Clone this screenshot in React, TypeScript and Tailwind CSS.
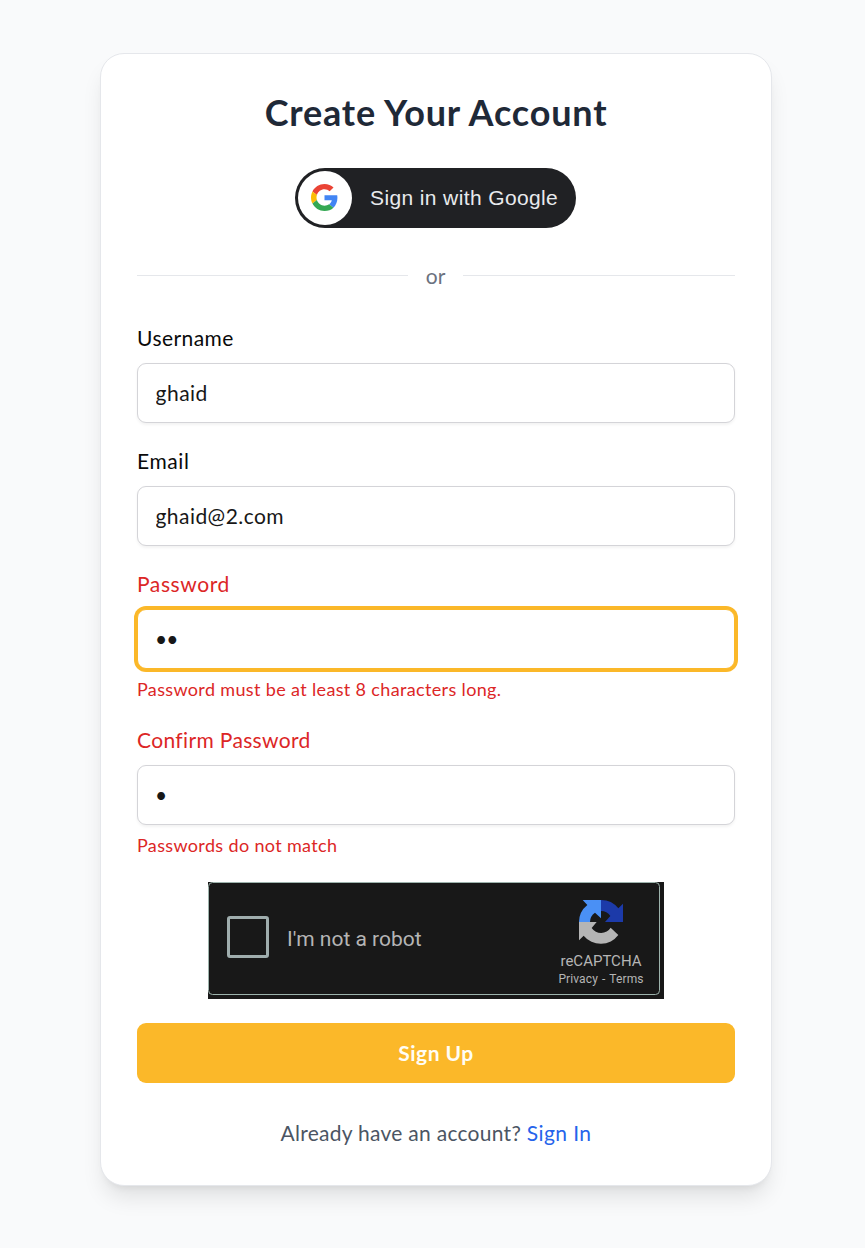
import React from "react";
import { clsx } from "clsx";

function GoogleLogo() {
  return (
    <svg viewBox="0 0 48 48" className="size-[27px]">
      <path fill="#EA4335" d="M24 9.5c3.54 0 6.71 1.22 9.21 3.6l6.85-6.85C35.9 2.38 30.47 0 24 0 14.62 0 6.51 5.38 2.56 13.22l7.98 6.19C12.43 13.72 17.74 9.5 24 9.5z" />
      <path fill="#4285F4" d="M46.98 24.55c0-1.57-.15-3.09-.38-4.55H24v9.02h12.94c-.58 2.96-2.26 5.48-4.78 7.18l7.73 6c4.51-4.18 7.09-10.36 7.09-17.65z" />
      <path fill="#FBBC05" d="M10.53 28.59c-.48-1.45-.76-2.99-.76-4.59s.27-3.14.76-4.59l-7.98-6.19C.92 16.46 0 20.12 0 24c0 3.88.92 7.54 2.56 10.78l7.97-6.19z" />
      <path fill="#34A853" d="M24 48c6.48 0 11.93-2.13 15.89-5.81l-7.73-6c-2.15 1.45-4.92 2.3-8.16 2.3-6.26 0-11.57-4.22-13.47-9.91l-7.98 6.19C6.51 42.62 14.62 48 24 48z" />
    </svg>
  );
}

function RecaptchaLogo() {
  return (
    <svg viewBox="0 0 132 132" className="size-11">
      <path fill="#4A90F5" d="M66 0H11L25 15A66 66 0 0 0 0 66H33A34 34 0 0 1 48 38L66 55Z" />
      <path fill="#1C3AA9" d="M132 66V11L118 25A66 66 0 0 0 66 0V33A34 34 0 0 1 94 48L78 66Z" />
      <path fill="#B5B5B5" d="M0 66V121L14 107A66 66 0 0 0 118 105L95 83A34 34 0 0 1 38 84L53 66Z" />
    </svg>
  );
}

type FieldProps = {
  id: string;
  label: string;
  value: string;
  type?: string;
  error?: string;
  active?: boolean;
  labelClass: string;
  inputClass?: string;
  errorClass?: string;
};

function Field({ id, label, value, type = "text", error, active, labelClass, inputClass, errorClass }: FieldProps) {
  return (
    <div className="flex flex-col">
      <label
        htmlFor={id}
        className={clsx("h-6 text-[21px] leading-6 whitespace-nowrap", error ? "text-[#dc2626]" : "text-[#0a0a0a]", labelClass)}
      >
        {label}
      </label>
      <input
        id={id}
        type={type}
        defaultValue={value}
        className={clsx(
          "mt-[13px] h-[60px] w-full rounded-[9px] border bg-white pb-0.5 text-[21px] text-[#171717] outline-none",
          active ? "border-[#fbb829] ring-3 ring-[#fbb829]" : "border-[#d4d4d8] shadow-[0_1.5px_3px_rgba(0,0,0,0.05)]",
          inputClass,
        )}
      />
      {error && (
        <p className={clsx("mt-2 mb-px h-6 text-[18px] leading-6 whitespace-nowrap text-[#dc2626]", errorClass)}>{error}</p>
      )}
    </div>
  );
}

function Recaptcha() {
  return (
    <div className="h-[117px] w-[456px] bg-[#181818] font-['Roboto',sans-serif] text-[#b5b5b5]">
      <div className="flex h-[113px] w-[452px] items-center rounded-[4.5px] border border-[#9db3ac] pr-[15px] pl-[18px]">
        <div className="mb-[3px] size-[42px] rounded-[3px] border-3 border-[#9fadad]" />
        <span className="ml-[18px] text-[21px] leading-6">I'm not a robot</span>
        <div className="ml-auto flex w-[86px] flex-col items-center pt-2.5">
          <RecaptchaLogo />
          <span className="mt-2 text-[15px] leading-[18px]">reCAPTCHA</span>
          <span className="flex gap-1 text-[12px] leading-[18px] tracking-[0.1px]">
            <span>Privacy</span>
            <span>-</span>
            <span>Terms</span>
          </span>
        </div>
      </div>
    </div>
  );
}

export default function App() {
  return (
    <main className="flex h-[1248px] justify-center bg-[#f9fafb] pt-[53px] pl-[7px] font-['Lato',sans-serif]">
      <section className="flex h-[1133px] w-[672px] flex-col rounded-[24px] border border-[#e5e7eb] bg-white px-9 shadow-[0_15px_22.5px_-4.5px_rgba(0,0,0,0.1),0_6px_9px_-6px_rgba(0,0,0,0.1)]">
        <h1 className="mt-[34px] h-12 text-center text-[36px] leading-12 font-bold whitespace-nowrap text-[#1f2937]">
          <span className="tracking-[0.82px]">Create Your Account</span>
        </h1>

        <button className="mt-8 mr-0.5 flex h-[60px] w-[281px] items-center self-center rounded-full bg-[#202124] p-[3px] font-['Liberation_Sans',sans-serif] text-[21px] text-[#e8eaed]">
          <span className="flex size-[54px] items-center justify-center rounded-full bg-white pr-px pb-px">
            <GoogleLogo />
          </span>
          <span className="ml-[18.5px] tracking-[0.38px] whitespace-nowrap">Sign in with Google</span>
        </button>

        <div className="mt-[35px] flex h-6 items-center">
          <div className="h-px w-[271px] bg-[#e5e7eb]" />
          <span className="w-[55px] pt-0.5 text-center text-[21px] leading-6 text-[#6b7280]">or</span>
          <div className="h-px flex-1 bg-[#e5e7eb]" />
        </div>

        <form className="mt-[39px] flex flex-col gap-[26px]">
          <Field id="username" label="Username" value="ghaid" labelClass="tracking-[0.45px]" inputClass="px-[17.5px] tracking-[0.5px]" />
          <Field id="email" label="Email" value="ghaid@2.com" labelClass="tracking-[0.6px]" inputClass="px-[17.5px] tracking-[0.45px]" />
          <Field
            id="password"
            label="Password"
            value="ab"
            type="password"
            active
            error="Password must be at least 8 characters long."
            labelClass="tracking-[0.6px]"
            inputClass="px-[17px] tracking-[-0.9px]"
            errorClass="tracking-[0.35px]"
          />
          <Field
            id="confirm"
            label="Confirm Password"
            value="a"
            type="password"
            error="Passwords do not match"
            labelClass="tracking-[0.35px]"
            inputClass="px-[17px] tracking-[-0.9px]"
            errorClass="tracking-[0.35px]"
          />
        </form>

        <div className="mt-6 flex justify-center">
          <Recaptcha />
        </div>

        <button className="mt-6 h-[60px] rounded-[9px] bg-[#fbb829] pb-px text-[21px] font-bold tracking-[0.5px] text-[#fffdf5]">
          Sign Up
        </button>

        <p className="mt-[38px] h-6 text-center text-[21px] leading-6 whitespace-nowrap text-[#4b5563]">
          <span className="tracking-[0.27px]">Already have an account? </span>
          <a className="tracking-[0.42px] text-[#2563eb]">Sign In</a>
        </p>
      </section>
    </main>
  );
}
